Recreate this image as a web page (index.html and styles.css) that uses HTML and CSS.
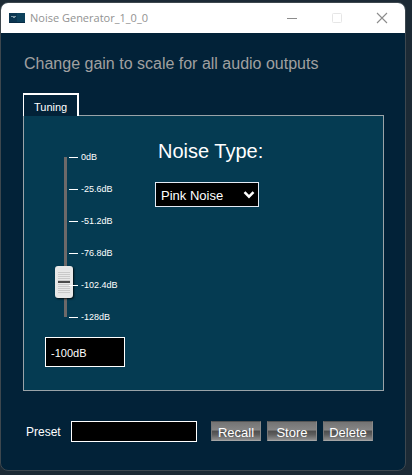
FILE: index.html
```
<!DOCTYPE html>
<html lang="en">
<head>
    <meta charset="UTF-8">
    <meta name="viewport" content="width=device-width, initial-scale=1.0">
    <title>Noise Generator_1_0_0</title>
    <link rel="stylesheet" href="styles.css">
</head>
<body>
    <div class="window">
        <header class="titlebar">
            <svg class="app-icon" width="16" height="10" viewBox="0 0 16 10" aria-hidden="true">
                <rect width="16" height="10" fill="#0b3550"/>
                <rect x="8" width="8" height="10" fill="#0d415c"/>
                <path d="M2 3h5v1H6v1H4V4H2z" fill="#7d98a6"/>
                <path d="M0 9h16v1H0z" fill="#082b44"/>
            </svg>
            <span class="title">Noise Generator_1_0_0</span>
            <div class="window-buttons">
                <button type="button" class="window-button" aria-label="Minimize">
                    <svg width="10" height="10" viewBox="0 0 10 10"><path d="M0 5.5h10" stroke="#8c8c8c"/></svg>
                </button>
                <button type="button" class="window-button" aria-label="Maximize" disabled>
                    <svg width="10" height="10" viewBox="0 0 10 10"><rect x=".5" y=".5" width="9" height="9" rx="1" fill="none" stroke="#e6e6e6"/></svg>
                </button>
                <button type="button" class="window-button" aria-label="Close">
                    <svg width="10" height="10" viewBox="0 0 10 10"><path d="M0 0l10 10M10 0L0 10" stroke="#8c8c8c" stroke-width="1.1"/></svg>
                </button>
            </div>
        </header>

        <main class="content">
            <p class="hint">Change gain to scale for all audio outputs</p>

            <div class="tabs" role="tablist">
                <button type="button" class="tab" id="tuningTab" role="tab" aria-selected="true" aria-controls="tuning">Tuning</button>
            </div>
            <section class="panel" id="tuning" role="tabpanel" aria-labelledby="tuningTab">
                <div class="gain">
                    <div class="fader-row">
                        <input type="range" class="fader" id="gain" min="-128" max="0" value="-100" aria-label="Gain">
                        <ul class="scale">
                            <li>0dB</li>
                            <li>-25.6dB</li>
                            <li>-51.2dB</li>
                            <li>-76.8dB</li>
                            <li>-102.4dB</li>
                            <li>-128dB</li>
                        </ul>
                    </div>
                    <input type="text" class="gain-value" id="gainValue" value="-100dB" aria-label="Gain value">
                </div>

                <div class="noise">
                    <label class="noise-label" for="noiseType">Noise Type:</label>
                    <div class="select-wrap">
                        <select class="noise-select" id="noiseType">
                            <option>Pink Noise</option>
                            <option>White Noise</option>
                        </select>
                        <svg class="chevron" width="12" height="8" viewBox="0 0 12 8" aria-hidden="true"><path d="M1.5 1.2L6 5.7l4.5-4.5" fill="none" stroke="#fff" stroke-width="2.5"/></svg>
                    </div>
                </div>
            </section>

            <form class="preset" id="presetForm">
                <label class="preset-label" for="preset">Preset</label>
                <input type="text" class="preset-input" id="preset">
                <div class="preset-buttons">
                    <button type="button" class="preset-button">Recall</button>
                    <button type="button" class="preset-button">Store</button>
                    <button type="button" class="preset-button">Delete</button>
                </div>
            </form>
        </main>
    </div>

    <script>
        const gain = document.getElementById('gain');
        const gainValue = document.getElementById('gainValue');

        gain.addEventListener('input', () => {
            gainValue.value = gain.value + 'dB';
        });

        gainValue.addEventListener('change', () => {
            gain.value = parseFloat(gainValue.value) || 0;
            gainValue.value = gain.value + 'dB';
        });
    </script>
</body>
</html>
```

FILE: styles.css
```
* {
    box-sizing: border-box;
}
body {
    min-height: 100vh;
    margin: 0;
    padding: 2px 6px 4px 0;
    font-family: "Liberation Sans", Arial, sans-serif;
    background-color: #1c2a35;
    color: white;
    display: flex;
}
button, input, select {
    font-family: inherit;
    color: inherit;
}
.window {
    flex: 1;
    min-width: 0;
    border: 1px solid #3d474e;
    border-radius: 8px;
    background-color: #022238;
    overflow: hidden;
}
.titlebar {
    display: flex;
    align-items: center;
    height: 30px;
    padding: 0 1px 1px 8px;
    background-color: white;
    color: #929292;
}
.title {
    margin-left: 5px;
    font-family: "Open Sans", "Noto Sans", sans-serif;
    font-size: 11px;
}
.window-buttons {
    display: flex;
    height: 100%;
    margin-left: auto;
}
.window-button {
    display: flex;
    align-items: center;
    justify-content: center;
    width: 45px;
    padding: 0;
    border: none;
    background: none;
}
.window-button svg {
    overflow: visible;
}
.content {
    padding: 21px 21px 26px 22px;
}
.hint {
    margin: 0 0 19px;
    padding-left: 1px;
    font-size: 16px;
    line-height: 20px;
    color: #a0a0a0;
}
.tabs {
    display: flex;
}
.tab {
    height: 23px;
    margin-bottom: -1px;
    padding: 2px 10px 0;
    border: 1px solid white;
    border-width: 2px 2px 0 1px;
    background-color: #022238;
    font-size: 11px;
    z-index: 1;
}
.panel {
    display: flex;
    gap: 30px;
    height: 276px;
    padding: 24px 21px;
    border: 1px solid #9aa3a8;
    background-color: #053b52;
}
.gain {
    width: 80px;
}
.fader-row {
    display: flex;
    padding: 1px 0 0 10px;
}
.fader {
    appearance: none;
    writing-mode: vertical-lr;
    direction: rtl;
    flex: none;
    width: 20px;
    height: 192px;
    margin: 0;
    background: linear-gradient(#6d6969, #6d6969) center / 3px 160px no-repeat;
}
.fader::-webkit-slider-runnable-track {
    width: 20px;
}
.fader::-webkit-slider-thumb {
    appearance: none;
    width: 18px;
    height: 32px;
    border: 2px solid #e8e8e8;
    border-radius: 3px;
    background:
        linear-gradient(#4b4b4b, #4b4b4b) center / 12px 2px no-repeat,
        repeating-linear-gradient(#e9e9e9 0 1px, #c9c9c9 1px 2px) center / 12px 22px no-repeat,
        #e6e6e6;
    box-shadow: 1px 1px 2px rgba(0, 0, 0, 0.8);
}
.scale {
    margin: 6px 0 0 -6px;
    padding: 0;
    list-style: none;
    font-size: 9px;
    line-height: 20px;
}
.scale li {
    display: flex;
    align-items: center;
    gap: 3px;
    margin-bottom: 12px;
    white-space: nowrap;
}
.scale li:last-child {
    margin-bottom: 0;
}
.scale li::before {
    content: "";
    width: 9px;
    height: 1px;
    background-color: white;
}
.gain-value {
    display: block;
    width: 80px;
    height: 30px;
    margin-top: 4px;
    padding: 1px 5px 0;
    border: 1px solid white;
    background-color: black;
    font-size: 11px;
}
.noise-label {
    display: block;
    margin: 0 0 19px 3px;
    font-size: 20px;
    line-height: 23px;
}
.select-wrap {
    position: relative;
    width: 104px;
}
.noise-select {
    appearance: none;
    display: block;
    width: 100%;
    height: 25px;
    padding: 1px 5px 0;
    border: 1px solid #e4ebf5;
    border-radius: 0;
    background-color: black;
    font-size: 13px;
}
.chevron {
    position: absolute;
    top: 9px;
    right: 4px;
    pointer-events: none;
}
.preset {
    display: flex;
    align-items: flex-start;
    margin-top: 30px;
    padding: 0 11px 0 3px;
}
.preset-label {
    margin-right: 10px;
    font-size: 12px;
    line-height: 23px;
}
.preset-input {
    flex: 1;
    min-width: 0;
    height: 21px;
    border: 1px solid white;
    background-color: black;
    font-size: 12px;
}
.preset-buttons {
    display: flex;
    gap: 6px;
    margin-left: 14px;
}
.preset-button {
    width: 50px;
    height: 20px;
    padding: 3px 0 0;
    border: 1px solid #666;
    border-color: #555 #8a8a8a #a5a5a5 #777;
    background: linear-gradient(#747474, #858585 45%, #4e4e4e 50%, #5e5e5e 70%, #8e8e8e);
    font-size: 13px;
    line-height: 15px;
}
```
